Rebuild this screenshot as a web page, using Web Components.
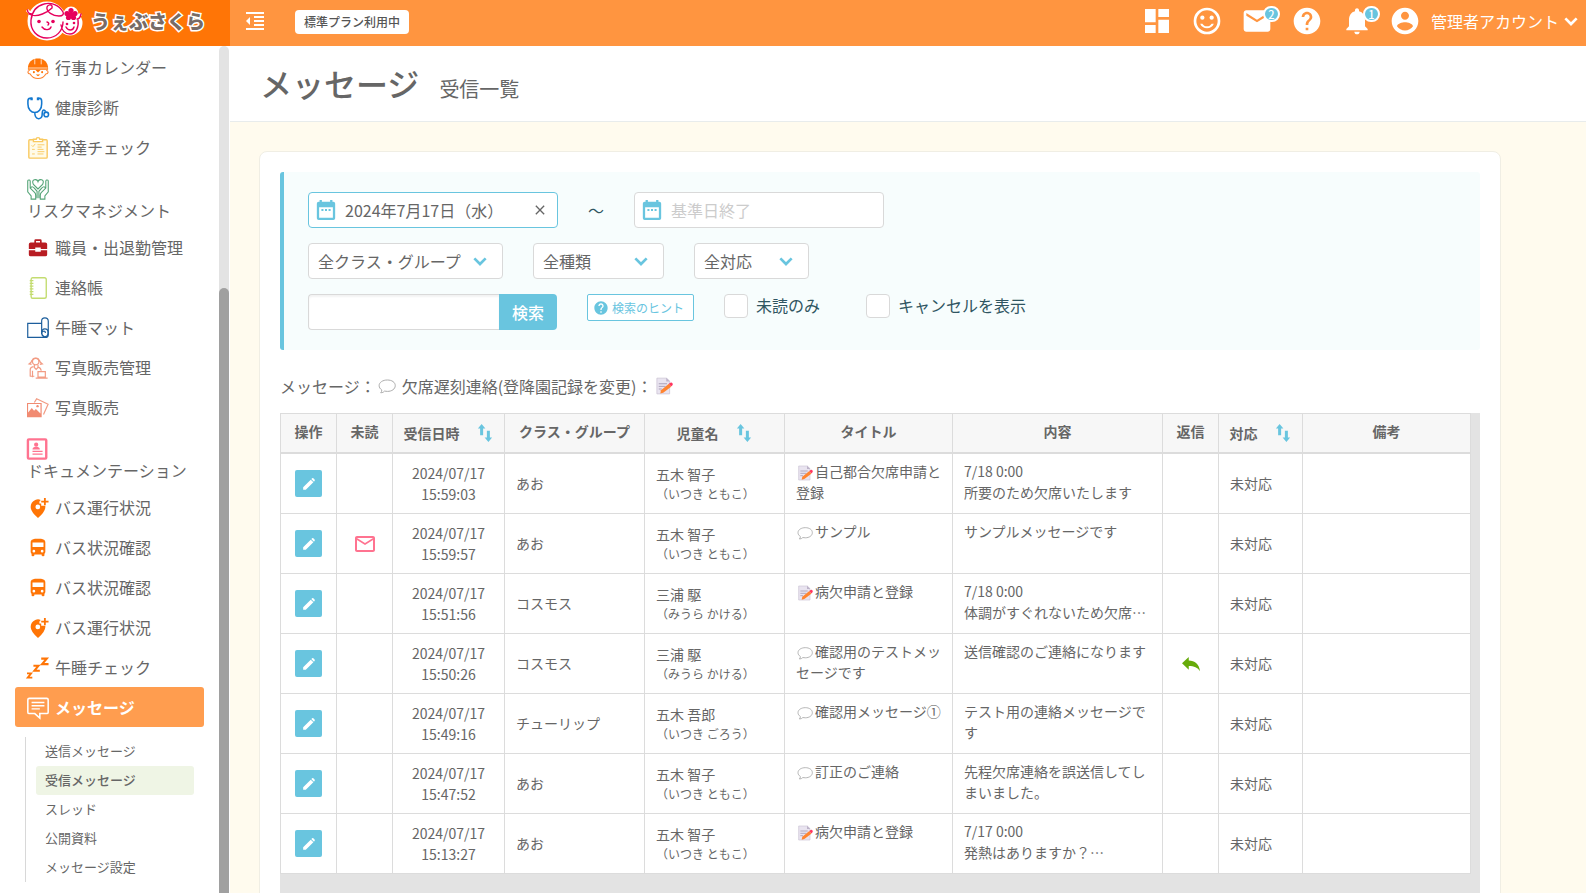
<!DOCTYPE html>
<html lang="ja">
<head>
<meta charset="utf-8">
<title>メッセージ 受信一覧</title>
<style>
html,body{margin:0;height:100%}
body{font-family:"Noto Sans CJK JP","Noto Sans",sans-serif;font-size:14px;line-height:21px;color:#666;background:#fffbee;overflow:hidden}
</style>
</head>
<body>
<app-shell></app-shell>
<script>
const ICONS = {
dashboard:'<path fill="currentColor" d="M3 13h8V3H3zm0 8h8v-6H3zm10 0h8V11h-8zm0-18v6h8V3z"/>',
smile:'<path fill="currentColor" d="M12 2a10 10 0 1 0 0 20 10 10 0 0 0 0-20zm0 18a8 8 0 1 1 0-16 8 8 0 0 1 0 16z"/><circle cx="8.5" cy="9.5" r="1.6" fill="currentColor"/><circle cx="15.5" cy="9.5" r="1.6" fill="currentColor"/><path fill="currentColor" d="M12 16c-1.48 0-2.75-.81-3.45-2H6.88c.8 2.05 2.79 3.5 5.12 3.5s4.32-1.45 5.12-3.5h-1.67c-.7 1.19-1.97 2-3.45 2z"/>',
mail:'<path fill="currentColor" d="M20 4H4c-1.1 0-2 .9-2 2v12c0 1.1.9 2 2 2h16c1.1 0 2-.9 2-2V6c0-1.1-.9-2-2-2zm0 4l-8 5-8-5V6l8 5 8-5v2z"/>',
help:'<path fill="currentColor" d="M12 2C6.48 2 2 6.48 2 12s4.48 10 10 10 10-4.48 10-10S17.52 2 12 2zm1 17h-2v-2h2v2zm2.07-7.75l-.9.92C13.45 12.9 13 13.5 13 15h-2v-.5c0-1.1.45-2.1 1.17-2.83l1.24-1.26c.37-.36.59-.86.59-1.41 0-1.1-.9-2-2-2s-2 .9-2 2H8c0-2.21 1.79-4 4-4s4 1.79 4 4c0 .88-.36 1.68-.93 2.25z"/>',
bell:'<path fill="currentColor" d="M12 22c1.1 0 2-.9 2-2h-4c0 1.1.89 2 2 2zm6-6v-5c0-3.07-1.64-5.64-4.5-6.32V4c0-.83-.67-1.5-1.5-1.5s-1.5.67-1.5 1.5v.68C7.63 5.36 6 7.92 6 11v5l-2 2v1h16v-1l-2-2z"/>',
account:'<path fill="currentColor" d="M12 2C6.48 2 2 6.48 2 12s4.48 10 10 10 10-4.48 10-10S17.52 2 12 2zm0 3c1.66 0 3 1.34 3 3s-1.34 3-3 3-3-1.34-3-3 1.34-3 3-3zm0 14.2c-2.5 0-4.71-1.28-6-3.22.03-1.99 4-3.08 6-3.08 1.99 0 5.97 1.09 6 3.08-1.29 1.94-3.5 3.22-6 3.22z"/>',
outdent:'<path fill="currentColor" d="M3 3h18v2H3zm8 4h10v2H11zm0 4h10v2H11zm0 4h10v2H11zM3 19h18v2H3zM3 12l4-4v8z"/>',
chevron:'<path fill="none" stroke="currentColor" stroke-width="4" d="M3.500 8l8.500 8.500L20.500 8"/>',
calendar:'<path fill="currentColor" fill-rule="evenodd" d="M5 1h2.500v2h9V1H19v2h1a2 2 0 0 1 2 2v16a2 2 0 0 1-2 2H4a2 2 0 0 1-2-2V5a2 2 0 0 1 2-2h1zM4.500 9v11.500h15V9zM7 11h2.200v2.200H7zm3.900 0h2.200v2.200h-2.200zm3.900 0H17v2.200h-2.200z"/>',
close:'<path fill="none" stroke="currentColor" stroke-width="3.200" d="M2 2l20 20M22 2L2 22"/>',
sort:'<path fill="currentColor" d="M5.500 15V6h-3l5-6 5 6h-3v9zM14.500 9v9h-3l5 6 5-6h-3V9z"/>',
pencil:'<path fill="currentColor" d="M2 22v-4.500L15 4.500l4.500 4.500L6.500 22zM16 3.500l1.500-1.500c1-1 4.500 2 4.500 3.500 0 1-1.500 2.500-1.500 2.500z"/>',
envelope:'<path fill="currentColor" d="M20 4H4c-1.100 0-2 .9-2 2v12c0 1.100.9 2 2 2h16c1.100 0 2-.9 2-2V6c0-1.100-.9-2-2-2zm0 14H4V8l8 5 8-5v10zm-8-7L4 6h16l-8 5z"/>',
reply:'<path fill="#66ab0a" d="M0 11L9 2.500v4.700c8 0 14 4.800 15 14.300-3-5-8-7-15-7V19.500z"/>',
bubble:'<path fill="#fff" stroke="#aaa" stroke-width="1.300" d="M12.500 4C6.500 4 1.500 7 1.500 11.500c0 2.400 1.400 4.400 3.600 5.800-.1 1.700-.6 2.700-1.500 3.700 2.300 0 3.900-.8 5.100-2.200 1.200.3 2.400.4 3.800.4 6 0 10.500-3.200 10.500-7.700S18.500 4 12.500 4z"/>',
memo:'<path fill="#e9e4f0" stroke="#cbc4d4" d="M2.500 1.500h13l4 4v17h-17z"/><path fill="#bdb3c9" d="M15 1v5h5z"/><path stroke="#a99fb8" stroke-width="1.300" d="M5 9h11M5 12.500h9M5 16h4"/><path fill="#ff8430" d="M8 17.500L18.500 9l3 4L11 21l-4 1z"/><path fill="#ff355f" d="M18.500 9l2-1.500q1.800-.8 2.800.7t-.3 3l-1.600 1.600z"/>',
helmet:'<path fill="#ff7506" d="M1 12c0-6 4-9.500 9-10.500h4c5 1 9 4.500 9 10.500v2H1z"/><path stroke="#fff" stroke-width=".8" fill="none" d="M8.500 2.500V8m7-5.500V8M1.500 12h21"/><path stroke="#ff8430" stroke-width="1.200" fill="#fff" d="M3 14.500c-3 .8-2.500 4 .5 4C5.500 22 9 23.500 12 23.500s6.500-1.500 8.500-5c3 0 3.500-3.200.5-4"/><path fill="#ff7506" d="M9 14h6l-3 3zM9.500 19h5l-2.500 2z"/><circle cx="7.500" cy="16.500" r="1.100" fill="#ff7506"/><circle cx="16.500" cy="16.500" r="1.100" fill="#ff7506"/>',
steth:'<g fill="none" stroke="#1378cf" stroke-width="1.700"><path d="M5.500 1.500H3Q1 1.500 1 4.500v3c0 6 3.500 9.500 7.500 9.500s7.500-3.500 7.500-9.500v-3q0-3-2-3h-2.500M8.500 17c0 9 8 8 8 2.500 0-6 2-6.500 4-3.500"/><circle cx="21" cy="19" r="2.500"/></g><path stroke="#1378cf" stroke-width="2.600" d="M5 .5v3M12 .5v3"/>',
clip:'<g fill="none" stroke="#f9c95f" stroke-width="1.500"><path fill="#fffbe9" d="M3 3h18q1 0 1 1v18q0 1-1 1H3q-1 0-1-1V4q0-1 1-1z"/><path fill="#fff" d="M7 5V2.500h3Q10 .7 12 .7t2 1.800h3V5z"/></g><g fill="none" stroke="#f9c95f"><path d="M5 9l1.500 1.500L9 7.500M11.500 8.500H19M5.500 13.500h3M11.500 13.500H18M5.500 18.500h3M11.500 18.500H18M11.500 16H19M11.500 11H16"/></g>',
hands:'<g fill="none" stroke="#55a578" stroke-width="1.200"><path d="M12 12L7 7Q5 3 8 2t4 2q1-3 4-2t1 5z"/><path d="M1 2.500q2-1 2.500 1V11l5 5q1 1 1 3v4H4.500v-3.500L.8 15V2.500M4 11q1-3 4 0l3 3.500V22M23 2.500q-2-1-2.500 1V11l-5 5q-1 1-1 3v4h5v-3.500l3.700-4.500V2.500M20 11q-1-3-4 0l-3 3.500V22"/></g>',
case:'<path fill="#b81c22" d="M8 6V4q0-1.500 1.500-1.500h5Q16 2.500 16 4v2h4q2 0 2 2v5h-7v-1.500H9V13H2V8q0-2 2-2zm1.800 0h4.400V4.300H9.800zM2 14.500h7V16h6v-1.500h7V19q0 2-2 2H4q-2 0-2-2z"/>',
book:'<path fill="#fff" stroke="#c3dc70" stroke-width="1.500" d="M6 .8h13q2 0 2 2v18.400q0 2-2 2H6q-1.500 0-1.500-2V2.800q0-2 1.500-2z"/><path stroke="#c3dc70" stroke-width="1.400" d="M3 4h4M3 7h4M3 10h4M3 13h4M3 16h4M3 19h4"/>',
mat:'<g fill="none" stroke="#1c5e9c" stroke-width="1.300"><path d="M16 7H.8v15.300H20q3.200 0 3.200-3V4.500Q23.200 1 19.500 1T16 4.500v14"/><path d="M16 18q0-5 3.500-5t3.500 4-3 4.500-4-3.500q0-2 2-2.500t2 2"/></g>',
seller:'<g fill="none" stroke="#f29c84" stroke-width="1.300"><circle cx="9.500" cy="5" r="3.500"/><path d="M6 5C4 0 15 0 13 5m-8 3L2.500 7.500Q5 6 5.500 3.500m8 0Q14 6 16.500 7.500L14 8M8 8.500v3l2 2 2-2v-3M3.500 21V14q0-3 3.500-3.500M12 11q3 .5 3.500 4M6 15v7M3 21h5M12 16h8v6h-8zM9.500 23h13"/></g>',
photos:'<path fill="none" stroke="#f29c84" stroke-width="1.300" d="M8 6l2.500-4L23 8l-5 11"/><path fill="#f18b72" fill-rule="evenodd" d="M0 6.500h16V22H0zM1.200 7.700V17l4-5 2.500 3 2-2 5 5V7.700z"/><circle cx="11.500" cy="10" r="1.300" fill="#f18b72"/>',
docum:'<path fill="#fff" stroke="#ff7390" stroke-width="2.600" d="M2 1.500h18q1 0 1 1v19q0 1-1 1H2q-1 0-1-1v-19q0-1 1-1z"/><circle cx="10" cy="7.300" r="2.300" fill="#ff7390"/><path fill="#ff7390" d="M6 12.500q0-3 4-3t4 3zM6 14h11v1.400H6zm0 3h11v1.400H6z"/>',
pin:'<path fill="#ff7506" fill-rule="evenodd" d="M14.500 3Q12 2 9 3.200 4 5.500 4 11q0 5 8 12 8-7 8-12V9.500h-4.500V7h-2V4.500h1zM11.800 8.200a2.600 2.600 0 1 0 0 5.200 2.600 2.600 0 0 0 0-5.200z"/><path stroke="#ff7506" stroke-width="2" d="M19.500 1v8M15.500 5h8"/>',
bus:'<path fill="#ff7506" d="M4 16c0 .88.39 1.670 1 2.220V20c0 .55.45 1 1 1h1c.55 0 1-.45 1-1v-1h8v1c0 .55.45 1 1 1h1c.55 0 1-.45 1-1v-1.780c.61-.55 1-1.340 1-2.220V6c0-3.500-3.580-4-8-4s-8 .5-8 4v10zm3.500 1a1.500 1.500 0 1 1 0-3 1.500 1.500 0 0 1 0 3zm9 0a1.500 1.500 0 1 1 0-3 1.500 1.500 0 0 1 0 3zM18 11H6V6h12v5z"/>',
zzz:'<path fill="none" stroke="#ff7506" stroke-width="2" d="M0 17.800h4.500L.800 22.500h5"/><path fill="none" stroke="#ff7506" stroke-width="2.200" d="M7 9.500h5.500l-4.500 5.500h6"/><path fill="none" stroke="#ff7506" stroke-width="2.400" d="M15.500 1.800h6l-5 6h7"/>',
chat:'<path fill="none" stroke="#fff" stroke-width="1.700" d="M2.500 1.500h19q1.600 0 1.600 1.600v13.400q0 1.600-1.600 1.600H14V23l-5.500-4.900h-6q-1.600 0-1.600-1.600V3.100q0-1.600 1.600-1.600z"/><path stroke="#fff" stroke-width="1.500" d="M5 6h14M5 9.500h14M5 13h9"/>'
};
function define(name, html, setup){
  const t=document.createElement('template'); t.innerHTML=html;
  customElements.define(name, class extends HTMLElement{
    constructor(){super();this.attachShadow({mode:'open'}).append(t.content.cloneNode(true));}
    connectedCallback(){ if(setup) setup(this,this.shadowRoot); }
  });
}
define('ui-icon','<style>:host{display:inline-block;width:24px;height:24px;flex:none}svg{display:block;width:100%;height:100%;overflow:visible}</style><svg viewBox="0 0 24 24" aria-hidden="true"></svg>',
 (el,r)=>{r.querySelector('svg').innerHTML=ICONS[el.getAttribute('name')]||'';});

define('brand-logo',`<style>
:host{display:block}
a{display:flex;align-items:center;gap:8px;height:42px;padding-left:25px;text-decoration:none}
svg{display:block;width:58px;height:42px}
span{font-size:19px;font-weight:900;line-height:24px;color:#776b66;-webkit-text-stroke:3px #fff;paint-order:stroke fill;white-space:nowrap}
</style>
<a href="#"><svg viewBox="0 0 58 42" aria-hidden="true"><g fill="#fff" stroke="#fff" stroke-width="3"><circle cx="22" cy="21" r="18"/><circle cx="45" cy="23" r="11"/><path d="M2 10l7 7M56 14l-5 5"/><circle cx="46" cy="14" r="6"/></g>
<g fill="none" stroke="#e6005c" stroke-width="1.400" stroke-linecap="round"><path d="M7 14C4 14 2.500 12 2.500 10M4 14C12 19 24 11 27 8c1-4-4-4-5-1-1 5 6 9 12 9 4 0 5-2 4-4C34 5 26 2 19 4 11 6 7 12 6 20c-1 10 6 18 16 18 9 0 16-7 16-16M17 27c3 4 8 3 9 0M22 22q3 1 1 3M36 25c1 6 4 9 9 9 6 0 9-7 8-14M56 14q-1 5-4 5M41 27c2 4 7 4 8 0"/></g>
<g fill="#e6005c"><circle cx="14" cy="21.500" r="1.800"/><circle cx="28" cy="21.500" r="1.800"/><circle cx="42" cy="24" r="1.300"/><circle cx="49" cy="23" r="1.300"/><circle cx="46" cy="10.500" r="2.600"/><circle cx="50" cy="13.500" r="2.600"/><circle cx="48.500" cy="17.500" r="2.600"/><circle cx="43.500" cy="17.500" r="2.600"/><circle cx="42" cy="13.500" r="2.600"/><circle cx="46" cy="14.500" r="2.500"/></g></svg><span>うぇぶさくら</span></a>`);

define('header-action',`<style>
:host{display:block}
button{position:relative;display:flex;align-items:center;justify-content:center;width:50px;height:42px;padding:0;border:0;background:none;color:#fff}
ui-icon{width:32px;height:32px}
b{position:absolute;left:31px;top:6px;box-sizing:border-box;width:17px;height:16px;border:2px solid #fff;border-radius:8px;background:#69c5df;font:500 11px/12px "Noto Sans CJK JP",sans-serif;text-align:center}
b[hidden]{display:none}
</style><button type="button"><ui-icon></ui-icon><b hidden></b></button>`,
(el,r)=>{const i=document.createElement('ui-icon');i.setAttribute('name',el.getAttribute('icon'));r.querySelector('ui-icon').replaceWith(i);
 r.querySelector('button').setAttribute('aria-label',el.getAttribute('label'));
 if(el.hasAttribute('count')){const b=r.querySelector('b');b.hidden=false;b.textContent=el.getAttribute('count');}});

define('app-header',`<style>
:host{display:flex;height:46px;background:#ff9540;color:#fff}
brand-logo{width:230px;height:46px;background:#ff7506;flex:none}
.bar{flex:1;display:flex;align-items:center;height:42px}
button{font:inherit;color:inherit;border:0;background:none;padding:0;display:flex;align-items:center}
.toggle{margin-left:13px}
.plan{margin-left:28px;padding:0 9px;border-radius:4px;background:#fff;color:#555;font-size:12px;line-height:24px;font-weight:500;margin-top:2px}
.actions{margin-left:auto;display:flex}
.account{padding:0 7px 0 7px;font-size:16px;line-height:24px}
.account ui-icon:first-child{width:32px;height:32px;margin-right:10px}
.account ui-icon:last-child{width:16px;height:16px;margin-left:4px}
</style>
<brand-logo></brand-logo>
<div class="bar"><button class="toggle" type="button" aria-label="メニュー"><ui-icon name="outdent"></ui-icon></button>
<span class="plan">標準プラン利用中</span>
<div class="actions"><header-action icon="dashboard" label="ダッシュボード"></header-action><header-action icon="smile" label="園児"></header-action><header-action icon="mail" label="メール" count="2"></header-action><header-action icon="help" label="ヘルプ"></header-action><header-action icon="bell" label="お知らせ" count="1"></header-action></div>
<button class="account" type="button"><ui-icon name="account"></ui-icon><span>管理者アカウント</span><ui-icon name="chevron"></ui-icon></button></div>`);

define('nav-item',`<style>
:host{display:block}
a{box-sizing:border-box;display:flex;align-items:center;gap:6px;height:40px;padding:0 12px;border-radius:3px;color:#666;text-decoration:none;font-size:16px;line-height:22px;white-space:nowrap}
ui-icon{width:22px;height:22px;padding-top:1px}
:host([stacked]) a{flex-direction:column;align-items:flex-start;justify-content:flex-start;gap:0;height:60px;padding-top:10px;line-height:20px}
:host([current]) a{background:#ff9d4f;color:#fff;font-weight:700}
</style><a href="#"><ui-icon></ui-icon><slot></slot></a>`,
(el,r)=>{const i=document.createElement('ui-icon');i.setAttribute('name',el.getAttribute('icon'));r.querySelector('ui-icon').replaceWith(i);});

define('side-nav',`<style>
:host{display:grid;grid-template-columns:1fr 10px;padding-right:1px;background:#fff;overflow:hidden}
nav{padding:1px 15px 0}
ul{list-style:none;margin:10px 10px 0;padding:0 0 0 10px;border-left:1px solid #d8d8d8}
li a{display:block;padding:0 9px 1px;border-radius:3px;font-size:13px;line-height:28px;color:#666;text-decoration:none}
li a[aria-current]{background:#eff5e5;font-weight:500}
.track{display:grid;grid-template-rows:2fr 5fr;background:#e3e3e3;border-radius:5px 5px 0 0}
.thumb{grid-row:2;background:#a0a0a0;border-radius:5px 5px 0 0}
</style>
<nav>
<nav-item icon="helmet">行事カレンダー</nav-item><nav-item icon="steth">健康診断</nav-item><nav-item icon="clip">発達チェック</nav-item>
<nav-item icon="hands" stacked>リスクマネジメント</nav-item><nav-item icon="case">職員・出退勤管理</nav-item><nav-item icon="book">連絡帳</nav-item>
<nav-item icon="mat">午睡マット</nav-item><nav-item icon="seller">写真販売管理</nav-item><nav-item icon="photos">写真販売</nav-item>
<nav-item icon="docum" stacked>ドキュメンテーション</nav-item><nav-item icon="pin">バス運行状況</nav-item><nav-item icon="bus">バス状況確認</nav-item>
<nav-item icon="bus">バス状況確認</nav-item><nav-item icon="pin">バス運行状況</nav-item><nav-item icon="zzz">午睡チェック</nav-item><nav-item icon="chat" current>メッセージ</nav-item>
<ul><li><a href="#">送信メッセージ</a></li><li><a href="#" aria-current="page">受信メッセージ</a></li><li><a href="#">スレッド</a></li><li><a href="#">公開資料</a></li><li><a href="#">メッセージ設定</a></li></ul>
</nav><div class="track"><div class="thumb"></div></div>`);

define('page-title',`<style>
:host{display:flex;align-items:baseline;gap:20px;box-sizing:border-box;height:76px;padding:14px 30px 0;background:#fff;border-bottom:1px solid #e8ecec}
h1{margin:0;font-size:32px;line-height:46px;font-weight:500}
p{margin:0;font-size:20px;line-height:30px}
</style><h1>メッセージ</h1><p>受信一覧</p>`);

define('date-field',`<style>
:host{display:block;width:250px}
div{box-sizing:border-box;display:flex;align-items:center;height:36px;padding:0 12px 0 6px;border:1px solid #d9d9d9;border-radius:4px;background:#fff}
:host([filled]) div{border-color:#69c5df}
ui-icon{width:22px;height:22px;color:#69c5df;margin-right:8px}
input{flex:1;min-width:0;padding:0;border:0;outline:0;background:none;font:inherit;font-size:16px;color:#666}
input::placeholder{color:#ccc;opacity:1}
button{padding:0;border:0;background:none;color:#666;display:none}
button ui-icon{width:10px;height:10px;margin:0;color:inherit}
:host([filled]) button{display:block}
</style><div><ui-icon name="calendar"></ui-icon><input type="text"><button type="button" aria-label="クリア"><ui-icon name="close"></ui-icon></button></div>`,
(el,r)=>{const i=r.querySelector('input');i.setAttribute('aria-label',el.getAttribute('label'));i.placeholder=el.getAttribute('label');i.value=el.getAttribute('value')||'';});

define('drop-down',`<style>
:host{display:block;position:relative}
select{appearance:none;box-sizing:border-box;width:100%;height:36px;padding:0 9px;border:1px solid #d9d9d9;border-radius:4px;background:#fff;font:inherit;font-size:16px;color:#666}
ui-icon{position:absolute;right:15px;top:10px;width:16px;height:16px;color:#69c5df;pointer-events:none}
</style><select><option></option></select><ui-icon name="chevron"></ui-icon>`,
(el,r)=>{r.querySelector('option').textContent=el.getAttribute('value');r.querySelector('select').setAttribute('aria-label',el.getAttribute('value'));});

define('check-box',`<style>
:host{display:block}
label{display:flex;align-items:flex-start;gap:8px;font-size:16px;line-height:22px;color:#2f5561}
input{appearance:none;margin:0;box-sizing:border-box;width:24px;height:24px;border:1px solid #d9d9d9;border-radius:4px;background:#fff}
</style><label><input type="checkbox"><span><slot></slot></span></label>`);

define('search-panel',`<style>
:host{display:flex;flex-direction:column;gap:15px;box-sizing:border-box;min-height:178px;padding:20px 24px;border-left:4px solid #69c5df;border-radius:3px;background:#f7fdfd}
.row{display:flex;align-items:flex-start;gap:30px}
.dates{align-items:center;gap:0}
.dates>span{width:76px;text-align:center;font-size:16px;color:#2f5561}
.search{display:flex}
.search input{box-sizing:border-box;width:191px;height:36px;padding:0 10px;border:1px solid #d9d9d9;border-right:0;border-radius:4px 0 0 4px;background:#fff;box-shadow:inset 0 2px 2px #0000000d;font:inherit;font-size:16px}
.search button{height:36px;width:58px;padding:0;border:0;border-radius:0 4px 4px 0;background:#69c5df;color:#fff;font:inherit;font-size:16px;font-weight:500}
.hint{box-sizing:border-box;height:27px;width:107px;display:flex;align-items:center;gap:3px;padding:0 5px;border:1px solid #69c5df;border-radius:2px;background:#fff;color:#69c5df;font:inherit;font-size:12px;white-space:nowrap}
.hint ui-icon{width:16px;height:16px}
.class{width:195px}.kind{width:131px}.state{width:115px}
check-box + check-box{margin-left:16px}
</style>
<div class="row dates"><date-field label="基準日開始" value="2024年7月17日（水）" filled></date-field><span>～</span><date-field label="基準日終了"></date-field></div>
<div class="row"><drop-down class="class" value="全クラス・グループ"></drop-down><drop-down class="kind" value="全種類"></drop-down><drop-down class="state" value="全対応"></drop-down></div>
<div class="row"><div class="search"><input type="search" aria-label="検索語"><button type="button">検索</button></div>
<button class="hint" type="button"><ui-icon name="help"></ui-icon>検索のヒント</button><check-box>未読のみ</check-box><check-box>キャンセルを表示</check-box></div>`);

const ROWS=[
['15:59:03','あお','五木 智子','いつき ともこ','memo','自己都合欠席申請と登録','7/18 0:00<br>所要のため欠席いたします'],
['15:59:57','あお','五木 智子','いつき ともこ','bubble','サンプル','サンプルメッセージです','unread'],
['15:51:56','コスモス','三浦 駆','みうら かける','memo','病欠申請と登録','7/18 0:00<br>体調がすぐれないため欠席…'],
['15:50:26','コスモス','三浦 駆','みうら かける','bubble','確認用のテストメッセージです','送信確認のご連絡になります','replied'],
['15:49:16','チューリップ','五木 吾郎','いつき ごろう','bubble','確認用メッセージ①','テスト用の連絡メッセージです'],
['15:47:52','あお','五木 智子','いつき ともこ','bubble','訂正のご連絡','先程欠席連絡を誤送信してしまいました。'],
['15:13:27','あお','五木 智子','いつき ともこ','memo','病欠申請と登録','7/17 0:00<br>発熱はありますか？…']];
define('message-table',`<style>
:host{display:block;background:#e3e3e3;padding:0 9px 30px 0}
table{width:100%;table-layout:fixed;border-collapse:separate;border-spacing:0;background:#fff;border-left:1px solid #dcdcdc;border-top:1px solid #dcdcdc}
col.s{width:56px}col.m{width:84px}col.d{width:112px}col.n{width:140px}col.t{width:168px}col.b{width:210px}
th,td{box-sizing:border-box;border-right:1px solid #dcdcdc;border-bottom:1px solid #dcdcdc}
th{height:40px;padding:0 0 4px;background:#f7f7f7;border-bottom-width:2px;font-weight:700}
th:has(button){padding:0}
th button{display:flex;align-items:center;gap:16px;margin:0 auto;padding:0;border:0;background:none;font:inherit;color:inherit}
th ui-icon{width:18px;height:18px;color:#69c5df}
td{height:60px;padding:0 11px}
td.c{text-align:center;padding:0}
.top{vertical-align:top;padding:7px 11px 0 11px}
.top>div{height:42px;overflow:hidden}
.top ui-icon{width:16px;height:16px;margin:0 2px 0 1px;vertical-align:-4px}
small{display:block;font-size:12px;line-height:18px}
.edit{display:flex;align-items:center;justify-content:center;width:27px;height:27px;margin:0 auto;padding:0;border:0;border-radius:2px;background:#69c5df;color:#fff}
.edit ui-icon{width:14px;height:14px}
.c>ui-icon{display:block;margin:0 auto}
.mail{color:#ff7390}
.reply{width:18px;height:18px}
</style><table>
<colgroup><col class="s"><col class="s"><col class="d"><col class="n"><col class="n"><col class="t"><col class="b"><col class="s"><col class="m"><col></colgroup>
<thead><tr><th>操作</th><th>未読</th><th><button>受信日時<ui-icon name="sort"></ui-icon></button></th><th>クラス・グループ</th><th><button>児童名<ui-icon name="sort"></ui-icon></button></th><th>タイトル</th><th>内容</th><th>返信</th><th><button>対応<ui-icon name="sort"></ui-icon></button></th><th>備考</th></tr></thead><tbody></tbody></table>`,
(el,r)=>{r.querySelector('tbody').innerHTML=ROWS.map(([time,cls,name,kana,icon,title,body,flag])=>
`<tr><td class="c"><button class="edit" type="button" aria-label="編集"><ui-icon name="pencil"></ui-icon></button></td>
<td class="c">${flag==='unread'?'<ui-icon class="mail" name="envelope"></ui-icon>':''}</td><td class="c">2024/07/17<br>${time}</td><td>${cls}</td>
<td>${name}<small>（${kana}）</small></td><td class="top"><div><ui-icon name="${icon}"></ui-icon>${title}</div></td><td class="top"><div>${body}</div></td>
<td class="c">${flag==='replied'?'<ui-icon class="reply" name="reply"></ui-icon>':''}</td><td>未対応</td><td></td></tr>`).join('');});

define('message-card',`<style>
:host{display:block;box-sizing:border-box;max-width:1242px;margin:29px 30px 0 29px;padding:20px;border:1px solid #f0eee4;border-radius:8px;background:#fff}
.legend{display:flex;align-items:center;margin:24px 0 15px;font-size:16px;line-height:24px}
.legend ui-icon{width:18px;height:18px}
.legend ui-icon:nth-of-type(1){margin:0 6px 0 2px}
.legend ui-icon:nth-of-type(2){margin-left:2px}
</style><search-panel></search-panel>
<div class="legend"><span>メッセージ：</span><ui-icon name="bubble"></ui-icon><span>欠席遅刻連絡(登降園記録を変更)：</span><ui-icon name="memo"></ui-icon></div>
<message-table></message-table>`);

define('app-shell',`<style>
:host{display:grid;grid-template:46px minmax(0,1fr) / 230px minmax(0,1fr);height:100vh}
app-header{grid-column:1 / -1}
main{overflow:hidden}
</style><app-header></app-header><side-nav></side-nav><main><page-title></page-title><message-card></message-card></main>`);
</script>
</body>
</html>
